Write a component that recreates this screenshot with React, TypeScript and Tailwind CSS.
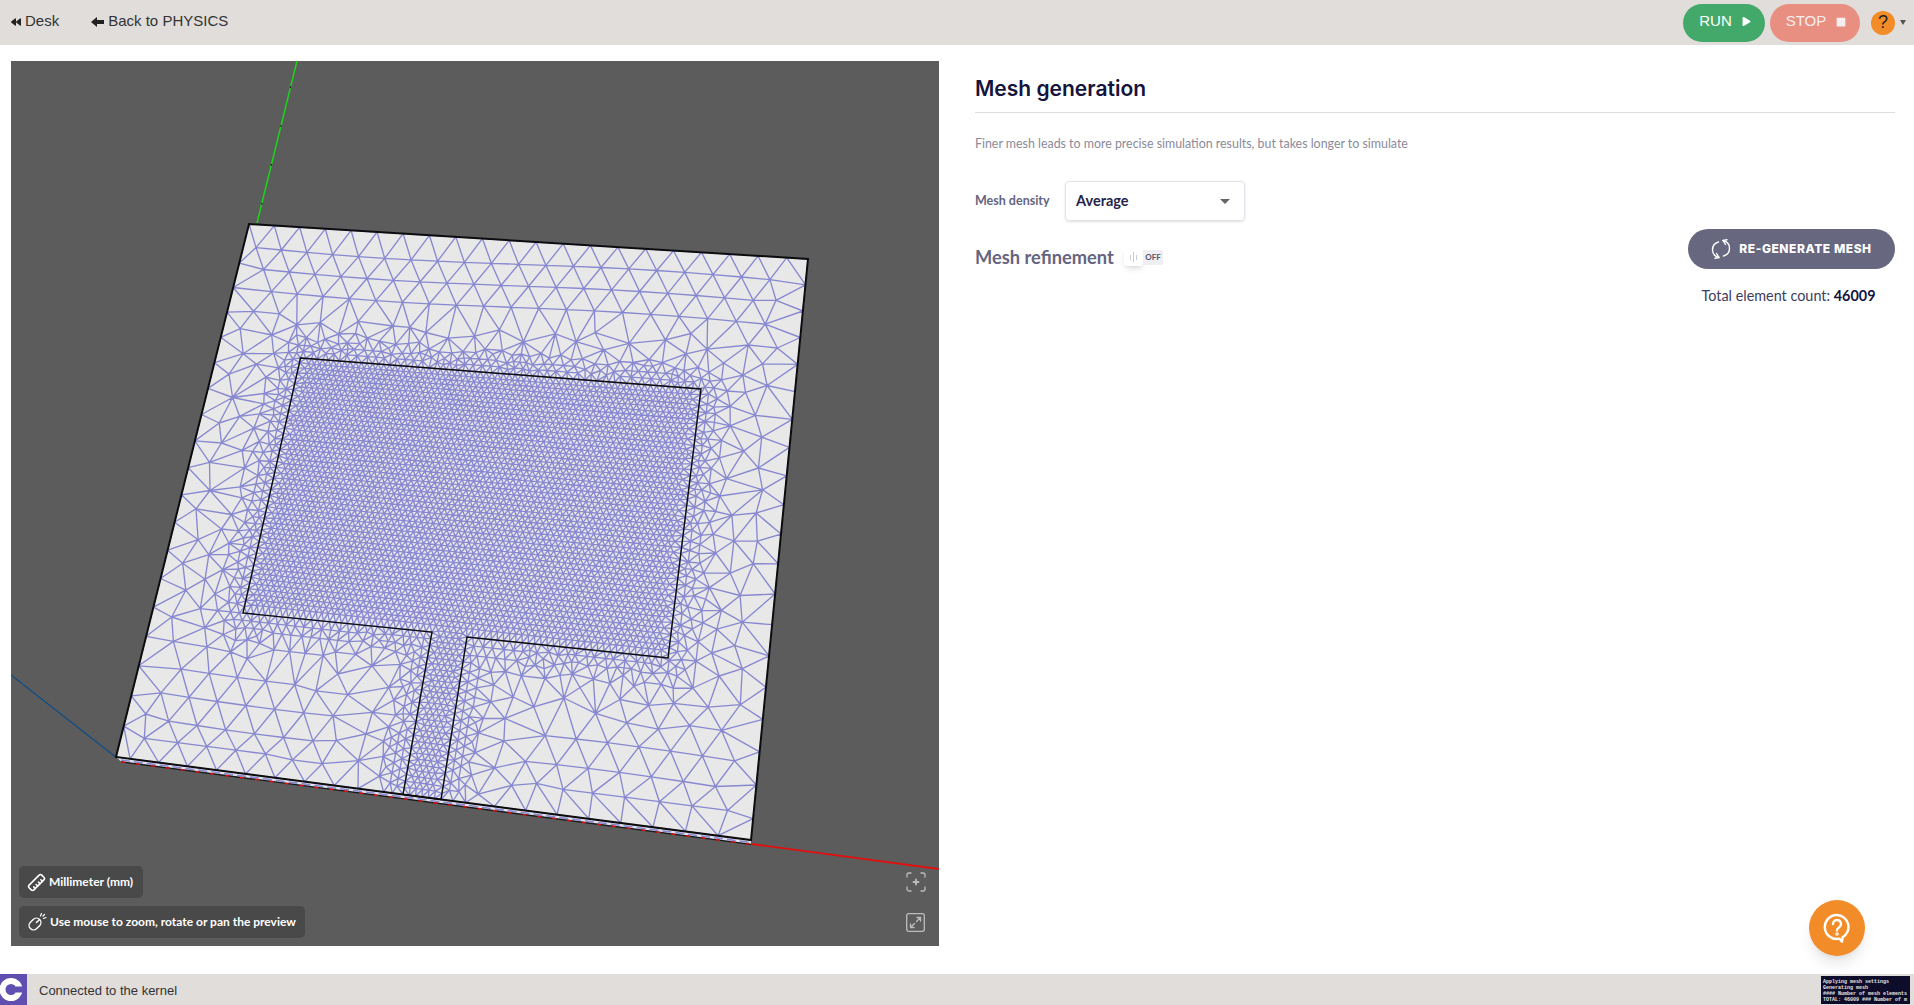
import { useMemo } from "react";
import { FaBackward, FaPlay, FaStop } from "react-icons/fa";
import { LuRuler } from "react-icons/lu";

type Pt = { x: number; y: number };

// plate corners, page coordinates
const TL = { x: 249, y: 224 };
const TR = { x: 808, y: 259 };
const BR = { x: 751, y: 840 };
const BL = { x: 116, y: 757 };

// black outline of the patch and its feed line
const patchOutline: Pt[] = [
    { x: 300.5, y: 358 },
    { x: 701, y: 389 },
    { x: 668, y: 658 },
    { x: 467, y: 637 },
    { x: 441, y: 799.5 },
    { x: 403, y: 794.5 },
    { x: 432, y: 632 },
    { x: 243, y: 613 },
];

const WORLD_W = 560;
const WORLD_H = 530;
const FINE = 5.6;
const COARSE = 27;

const makeHomography = () => {
    const dx1 = TR.x - BR.x, dx2 = BL.x - BR.x, sx = TL.x - TR.x + BR.x - BL.x;
    const dy1 = TR.y - BR.y, dy2 = BL.y - BR.y, sy = TL.y - TR.y + BR.y - BL.y;
    const det = dx1 * dy2 - dx2 * dy1;
    const g = (sx * dy2 - dx2 * sy) / det;
    const h = (dx1 * sy - sx * dy1) / det;
    const a = TR.x - TL.x + g * TR.x, b = BL.x - TL.x + h * BL.x, c = TL.x;
    const d = TR.y - TL.y + g * TR.y, e = BL.y - TL.y + h * BL.y, f = TL.y;
    const toScreen = (p: Pt): Pt => {
        const u = p.x / WORLD_W, v = p.y / WORLD_H;
        const w = g * u + h * v + 1;
        return { x: (a * u + b * v + c) / w, y: (d * u + e * v + f) / w };
    };
    const toWorld = (p: Pt): Pt => {
        const w = (d * h - e * g) * p.x + (b * g - a * h) * p.y + (a * e - b * d);
        return {
            x: (((e - f * h) * p.x + (c * h - b) * p.y + (b * f - c * e)) / w) * WORLD_W,
            y: (((f * g - d) * p.x + (a - c * g) * p.y + (c * d - a * f)) / w) * WORLD_H,
        };
    };
    return { toScreen, toWorld };
};

const triangulate = (pts: Pt[]) => {
    const n = pts.length;
    const all = [...pts, { x: -5000, y: -5000 }, { x: 7000, y: -5000 }, { x: 500, y: 9000 }];
    const order = pts.map((_, i) => i).sort((p, q) => pts[p].x - pts[q].x);
    const circle = (i: number, j: number, k: number) => {
        const A = all[i], B = all[j], C = all[k];
        const bx = B.x - A.x, by = B.y - A.y, cx = C.x - A.x, cy = C.y - A.y;
        const d = 2 * (bx * cy - by * cx) || 1e-9;
        const ux = (cy * (bx * bx + by * by) - by * (cx * cx + cy * cy)) / d;
        const uy = (bx * (cx * cx + cy * cy) - cx * (bx * bx + by * by)) / d;
        return { i, j, k, x: A.x + ux, y: A.y + uy, r: ux * ux + uy * uy };
    };
    let open = [circle(n, n + 1, n + 2)];
    const closed: { i: number; j: number; k: number }[] = [];
    for (const idx of order) {
        const p = all[idx];
        const keep: typeof open = [];
        const edges = new Map<string, [number, number]>();
        const addEdge = (a: number, b: number) => {
            const key = a < b ? `${a}_${b}` : `${b}_${a}`;
            if (edges.has(key)) edges.delete(key);
            else edges.set(key, [a, b]);
        };
        for (const t of open) {
            const dx = p.x - t.x;
            if (dx > 0 && dx * dx > t.r) {
                closed.push(t);
                continue;
            }
            const dy = p.y - t.y;
            if (dx * dx + dy * dy > t.r) {
                keep.push(t);
                continue;
            }
            addEdge(t.i, t.j);
            addEdge(t.j, t.k);
            addEdge(t.k, t.i);
        }
        edges.forEach(([a, b]) => keep.push(circle(a, b, idx)));
        open = keep;
    }
    const seen = new Set<string>();
    const result: [number, number][] = [];
    for (const t of [...closed, ...open]) {
        for (const [a, b] of [[t.i, t.j], [t.j, t.k], [t.k, t.i]]) {
            if (a >= n || b >= n) continue;
            const key = a < b ? `${a}_${b}` : `${b}_${a}`;
            if (seen.has(key)) continue;
            seen.add(key);
            result.push([a, b]);
        }
    }
    return result;
};

const buildMesh = () => {
    const { toScreen, toWorld } = makeHomography();
    const poly = patchOutline.map(toWorld);

    const distToPatch = (p: Pt) => {
        let inside = false;
        let best = Infinity;
        for (let i = 0, j = poly.length - 1; i < poly.length; j = i++) {
            const a = poly[i], b = poly[j];
            if (a.y > p.y !== b.y > p.y && p.x < ((b.x - a.x) * (p.y - a.y)) / (b.y - a.y) + a.x) inside = !inside;
            const ex = b.x - a.x, ey = b.y - a.y;
            const t = Math.max(0, Math.min(1, ((p.x - a.x) * ex + (p.y - a.y) * ey) / (ex * ex + ey * ey)));
            best = Math.min(best, Math.hypot(p.x - a.x - t * ex, p.y - a.y - t * ey));
        }
        return inside ? 0 : best;
    };
    // slow growth right next to the patch, then quickly up to the plate size
    const sizeAt = (p: Pt) => {
        const d = distToPatch(p);
        const s = d < 18 ? FINE + 0.2 * d : FINE + 3.6 + 0.55 * (d - 18);
        return Math.min(COARSE, s);
    };

    const pts: Pt[] = [];
    const cells = new Map<string, Pt[]>();
    const CELL = 30;
    const tryAdd = (p: Pt, minDist: number) => {
        const cx = Math.floor(p.x / CELL), cy = Math.floor(p.y / CELL);
        for (let i = cx - 1; i <= cx + 1; i++) {
            for (let j = cy - 1; j <= cy + 1; j++) {
                for (const q of cells.get(`${i}_${j}`) ?? []) {
                    if (Math.hypot(p.x - q.x, p.y - q.y) < minDist) return;
                }
            }
        }
        const key = `${cx}_${cy}`;
        if (!cells.has(key)) cells.set(key, []);
        cells.get(key)!.push(p);
        pts.push(p);
    };

    // small fixed wobble so collinear points do not break the circles
    let seed = 7;
    const wobble = () => {
        seed = (seed * 16807) % 2147483647;
        return (seed / 2147483647 - 0.5) * 0.04;
    };

    // points on the plate edges and on the patch outline first
    const walk = (a: Pt, b: Pt) => {
        const len = Math.hypot(b.x - a.x, b.y - a.y);
        let t = 0;
        while (t < len) {
            const p = { x: a.x + ((b.x - a.x) * t) / len, y: a.y + ((b.y - a.y) * t) / len };
            tryAdd({ x: p.x + wobble(), y: p.y + wobble() }, 0.7 * sizeAt(p));
            t += sizeAt(p);
        }
    };
    poly.forEach((a, i) => walk(a, poly[(i + 1) % poly.length]));
    const c = [{ x: 0, y: 0 }, { x: WORLD_W, y: 0 }, { x: WORLD_W, y: WORLD_H }, { x: 0, y: WORLD_H }];
    c.forEach((a, i) => walk(a, c[(i + 1) % 4]));

    const lattice = (s: number, test: (size: number) => boolean, factor: number) => {
        const rowH = s * 0.866;
        for (let r = 1; r * rowH < WORLD_H; r++) {
            for (let q = 0; q * s < WORLD_W + s; q++) {
                const base = { x: q * s + (r % 2 ? s / 2 : 0), y: r * rowH };
                const bend = s > 12 ? Math.sin(base.x / 90) * 3 + Math.cos(base.y / 70) * 2 : 0;
                const p = { x: base.x + wobble(), y: base.y + bend + wobble() };
                if (p.x <= 3 || p.x >= WORLD_W - 3 || p.y <= 3 || p.y >= WORLD_H - 3) continue;
                const size = sizeAt(p);
                if (test(size)) tryAdd(p, factor * size);
            }
        }
    };

    // regular lattice inside the patch
    lattice(FINE, (size) => size <= FINE + 0.01, 0.8);

    // graded rows growing out of the patch, smallest size first
    const candidates: { p: Pt; size: number }[] = [];
    for (let x = 3; x < WORLD_W - 2; x += 2.1) {
        for (let y = 3; y < WORLD_H - 2; y += 2.1) {
            const p = { x: x + wobble(), y: y + wobble() };
            candidates.push({ p, size: sizeAt(p) });
        }
    }
    candidates.sort((a, b) => a.size - b.size);
    for (const { p, size } of candidates) {
        if (size > FINE + 0.01 && size < COARSE - 1) tryAdd(p, 0.92 * size);
    }

    // coarse lattice over the rest of the plate, then close the big holes
    lattice(COARSE, (size) => size >= COARSE - 1, 0.8);
    for (const { p, size } of candidates) {
        if (size > FINE + 0.01) tryAdd(p, 0.76 * size);
    }

    const screen = pts.map(toScreen);
    return triangulate(pts)
        .map(([a, b]) => `M${screen[a].x.toFixed(1)} ${screen[a].y.toFixed(1)}L${screen[b].x.toFixed(1)} ${screen[b].y.toFixed(1)}`)
        .join("");
};

const outlinePath = patchOutline.map((p, i) => `${i ? "L" : "M"}${p.x} ${p.y}`).join("") + "Z";

const MeshView = () => {
    const mesh = useMemo(buildMesh, []);
    return (
        <svg viewBox="11 61 928 885" className="block w-full h-full">
            {/* axes */}
            <line x1="297" y1="61" x2="257" y2="223" stroke="#19d419" strokeWidth="1.5" />
            <line x1="297" y1="61" x2="257" y2="223" stroke="#222" strokeWidth="1.2" strokeDasharray="2 38" strokeDashoffset="14" />
            <line x1="11" y1="675" x2="117" y2="758" stroke="#0f4d86" strokeWidth="1.3" />
            <line x1="751" y1="844" x2="939" y2="869" stroke="#e01010" strokeWidth="1.8" />
            {/* plate with its thin side */}
            <polygon points={`${BL.x},${BL.y} ${BR.x},${BR.y} ${BR.x},${BR.y + 4} ${BL.x + 5},${BL.y + 4.5}`} fill="#e4e4f0" />
            <line x1={BL.x + 5} y1={BL.y + 3} x2={BR.x} y2={BR.y + 2.5} stroke="#8a8ad0" strokeWidth="1.6" strokeDasharray="9 4" />
            <line x1={BL.x + 5} y1={BL.y + 4.8} x2={BR.x} y2={BR.y + 4.3} stroke="#1a1a1a" strokeWidth="1.3" />
            <line x1={BL.x + 5} y1={BL.y + 4.8} x2={BR.x} y2={BR.y + 4.3} stroke="#e01010" strokeWidth="1.5" strokeDasharray="4 11" />
            <polygon points={`${TL.x},${TL.y} ${TR.x},${TR.y} ${BR.x},${BR.y} ${BL.x},${BL.y}`} fill="#e8e8e8" />
            <path d={mesh} fill="none" stroke="#8888d0" strokeWidth="1.35" />
            <polygon points={`${TL.x},${TL.y} ${TR.x},${TR.y} ${BR.x},${BR.y} ${BL.x},${BL.y}`} fill="none" stroke="#0c0c0c" strokeWidth="2" />
            <path d={outlinePath} fill="none" stroke="#0c0c0c" strokeWidth="1.4" />
        </svg>
    );
};

const ThickArrowLeft = () => (
    <svg width="13" height="10" viewBox="0 0 13 10" fill="#222">
        <path d="M0 5L6 0V3H13V7H6V10Z" />
    </svg>
);

const MouseIcon = () => (
    <svg width="20" height="20" viewBox="0 0 20 20" fill="none" stroke="white" strokeWidth="1.4" strokeLinecap="round">
        <g transform="rotate(45 8 12)">
            <rect x="3.5" y="5.5" width="9" height="13" rx="4.5" />
            <path d="M8 5.5V10" />
        </g>
        <path d="M13.5 4L14.5 1.5M16.5 6.5L19 5.5M16 4L17.5 2.5" strokeWidth="1.2" />
    </svg>
);

const FitIcon = () => (
    <svg width="20" height="20" viewBox="0 0 20 20" fill="none" stroke="#bdbdbd" strokeWidth="1.3" strokeLinecap="round">
        <path d="M1 5V3a2 2 0 0 1 2-2h2M15 1h2a2 2 0 0 1 2 2v2M19 15v2a2 2 0 0 1-2 2h-2M5 19H3a2 2 0 0 1-2-2v-2" />
        <path d="M10 7.5v5M7.5 10h5" strokeWidth="1.8" />
    </svg>
);

const ExpandIcon = () => (
    <svg width="19" height="19" viewBox="0 0 19 19" fill="none" stroke="#bdbdbd" strokeWidth="1.3" strokeLinecap="round">
        <rect x="0.7" y="0.7" width="17.6" height="17.6" rx="2" />
        <path d="M10.5 8.5L14.5 4.5M11 4.5h3.5V8M8.5 10.5L4.5 14.5M4.5 11v3.5H8" />
    </svg>
);

const RegenIcon = () => (
    <svg width="20" height="20" viewBox="0 0 20 20" fill="none" stroke="white" strokeWidth="1.4" strokeLinecap="round" strokeLinejoin="round">
        <path d="M8 18.5C4 17.5 1.5 14.5 1.5 10.8 1.5 7 4 4 7.5 3" />
        <path d="M5.5 14.5L8 18.5 4 19.2" />
        <path d="M12 1.5c4 1 6.5 4 6.5 7.7 0 3.8-2.5 6.8-6 7.8" />
        <path d="M14.5 5.5L12 1.5 16 .8" />
    </svg>
);

const HelpBubble = () => (
    <svg width="28" height="30" viewBox="0 0 28 30" fill="none" stroke="white" strokeWidth="2.4" strokeLinecap="round" strokeLinejoin="round">
        <path d="M14 2a12 12 0 1 0 2.5 23.7l2.5 3 .6-4.4A12 12 0 0 0 14 2z" />
        <path d="M10 11a4 4 0 1 1 6.2 3.3c-1.4.9-2.2 1.6-2.2 3" />
        <circle cx="14" cy="21" r="0.6" />
    </svg>
);

const Logo = () => (
    <div className="w-[27px] h-full bg-[#5f4fb0] flex items-center justify-center overflow-hidden">
        <svg width="27" height="31" viewBox="0 0 27 31" fill="none">
            <circle cx="11" cy="15.5" r="8.5" stroke="white" strokeWidth="6" />
            <rect x="16" y="12.5" width="9" height="6" fill="#5f4fb0" />
        </svg>
    </div>
);

export default function App() {
    return (
        <div className="h-screen w-full flex flex-col bg-white overflow-hidden relative font-['Lato',sans-serif]">
            {/* Top bar */}
            <div className="h-[45px] shrink-0 bg-[#e0dddb] flex items-center justify-between pl-[11px] pr-[8px] font-['Liberation_Sans',sans-serif] text-[#333]">
                <div className="flex items-center text-[15px] pb-[2px]">
                    <span className="flex items-center gap-[4px]">
                        <FaBackward className="text-[10px] text-[#222]" /> Desk
                    </span>
                    <span className="flex items-center gap-[4px] ml-[32px]">
                        <ThickArrowLeft /> Back to PHYSICS
                    </span>
                </div>
                <div className="flex items-center">
                    <button className="w-[82px] h-[38px] pb-[2px] pl-[2px] rounded-full bg-[#43a96b] text-white text-[15px] flex items-center justify-center gap-[10px]">
                        RUN <FaPlay className="text-[9px]" />
                    </button>
                    <button className="w-[90px] h-[38px] pb-[2px] pl-[2px] ml-[5px] rounded-full bg-[#e88f82] text-[#f5eeee] text-[15px] flex items-center justify-center gap-[10px]">
                        STOP <FaStop className="text-[10px]" />
                    </button>
                    <div className="w-[24px] h-[24px] ml-[11px] rounded-full bg-[#f28c28] flex items-center justify-center text-[18px] text-[#222]">?</div>
                    <div className="ml-[5px] w-0 h-0 border-x-[3.5px] border-x-transparent border-t-[5px] border-t-[#555]" />
                </div>
            </div>

            {/* Content */}
            <div className="flex-1 min-h-0 flex">
                {/* Preview */}
                <div className="w-[975px] shrink-0 pl-[11px] pr-[36px] pt-[16px]">
                    <div className="relative w-[928px] h-[885px] bg-[#5c5c5c] overflow-hidden">
                        <MeshView />
                        <div className="absolute left-[8px] top-[805px] h-[32px] w-[124px] rounded-[5px] bg-[#494949] flex items-center pl-[8px] gap-[3px] text-white text-[12px] font-bold">
                            <LuRuler className="text-[19px] shrink-0 rotate-90" /> Millimeter (mm)
                        </div>
                        <div className="absolute left-[8px] top-[845px] h-[32px] w-[286px] rounded-[5px] bg-[#494949] flex items-center pl-[8px] gap-[3px] text-white text-[12px] font-bold whitespace-nowrap">
                            <MouseIcon /> Use mouse to zoom, rotate or pan the preview
                        </div>
                        <div className="absolute left-[895px] top-[811px]"><FitIcon /></div>
                        <div className="absolute left-[895px] top-[852px]"><ExpandIcon /></div>
                    </div>
                </div>

                {/* Settings */}
                <div className="w-[920px] shrink-0">
                    <div className="h-[68px] border-b border-[#dcdce2] flex items-end pb-[8px]">
                        <h1 className="text-[21px] leading-[30px] font-semibold text-[#14143c] font-['Inter',sans-serif]">Mesh generation</h1>
                    </div>
                    <p className="mt-[22px] text-[12.4px] leading-[18px] text-[#8a8a9a]">Finer mesh leads to more precise simulation results, but takes longer to simulate</p>
                    <div className="mt-[28px] flex items-start justify-between">
                        <div>
                            <div className="flex items-center">
                                <span className="w-[90px] text-[12.5px] font-bold text-[#65657f]">Mesh density</span>
                                <div className="w-[180px] h-[40px] rounded-[4px] border border-[#e2e2ea] shadow-sm flex items-center justify-between pl-[10px] pr-[14px] text-[14.5px] font-bold text-[#25254a]">
                                    Average
                                    <div className="w-0 h-0 border-x-[5px] border-x-transparent border-t-[5px] border-t-[#666]" />
                                </div>
                            </div>
                            <div className="mt-[26px] flex items-center">
                                <span className="w-[149px] text-[18.3px] leading-[20px] font-bold text-[#65657f]">Mesh refinement</span>
                                <div className="flex items-center">
                                    <div className="w-[19px] h-[18px] rounded-[3px] bg-white shadow-md flex items-center justify-center gap-[2px]">
                                        <span className="w-px h-[5px] bg-[#ccccd4]" />
                                        <span className="w-px h-[10px] bg-[#ccccd4]" />
                                        <span className="w-px h-[5px] bg-[#ccccd4]" />
                                    </div>
                                    <div className="w-[20px] h-[15px] bg-[#eeeef3] rounded-r-[2px] flex items-center justify-center text-[8px] font-bold text-[#55556f]">OFF</div>
                                </div>
                            </div>
                        </div>
                        <div className="mt-[48px] w-[207px] flex flex-col items-center">
                            <button className="w-[207px] h-[40px] rounded-full bg-[#67677f] flex items-center justify-center gap-[8px] text-white text-[12px] font-extrabold tracking-[0.55px] font-['Inter',sans-serif]">
                                <RegenIcon /> RE-GENERATE MESH
                            </button>
                            <p className="mt-[18px] mr-[6px] text-[14.4px] leading-[18px] text-[#3e3e5e]">
                                Total element count: <span className="font-bold text-[#14143c]">46009</span>
                            </p>
                        </div>
                    </div>
                </div>
            </div>

            {/* Status bar */}
            <div className="h-[31px] shrink-0 bg-[#e0dddb] flex items-center justify-between pr-[4px] font-['Liberation_Sans',sans-serif]">
                <div className="h-full flex items-center">
                    <Logo />
                    <span className="ml-[12px] pt-[2px] text-[13px] text-[#333]">Connected to the kernel</span>
                </div>
                <div className="w-[89px] h-[28px] self-end bg-[#0d0d2b] text-[#e4e4e4] text-[5px] leading-[6px] font-['Liberation_Mono',monospace] font-bold whitespace-nowrap pl-[2px] pb-[1px] mb-[1px] flex flex-col justify-end">
                    <div>Applying mesh settings</div>
                    <div>Generating mesh</div>
                    <div>#### Number of mesh elements</div>
                    <div>TOTAL: 46009 ### Number of m</div>
                </div>
            </div>

            {/* Help button */}
            <div className="absolute left-[1809px] top-[900px] w-[56px] h-[56px] rounded-full bg-[#f28c28] shadow-lg flex items-center justify-center">
                <HelpBubble />
            </div>
        </div>
    );
}
